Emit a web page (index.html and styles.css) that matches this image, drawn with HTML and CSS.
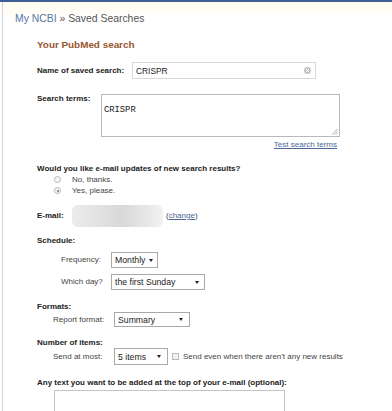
FILE: index.html
```html
<!DOCTYPE html>
<html>
<head>
<meta charset="utf-8">
<link rel="stylesheet" href="styles.css">
</head>
<body>
<div class="topbar"></div>
<div class="frame">
  <div class="crumb"><a class="crumb-link">My NCBI</a> » Saved Searches</div>
  <div class="form">
    <h2 class="title">Your PubMed search</h2>

    <div class="row row-name">
      <span class="lbl lbl-name">Name of saved search:</span>
      <div class="input">
        <span class="input-text">CRISPR</span>
        <span class="clear"><svg width="7" height="7" viewBox="0 0 7 7"><circle cx="3.5" cy="3.5" r="3.5" fill="#c4c4c4"/><path d="M2 2L5 5M5 2L2 5" stroke="#fff" stroke-width="1"/></svg></span>
      </div>
    </div>

    <div class="terms-block">
      <div class="row row-terms">
        <span class="lbl lbl-terms">Search terms:</span>
        <div class="textarea">
          <span class="mono">CRISPR</span>
          <svg class="grip" width="7" height="7" viewBox="0 0 7 7"><path d="M6.5 1L1 6.5M6.5 3.5L3.5 6.5M6.5 5.5L5.5 6.5" stroke="#999" stroke-width="0.8"/></svg>
        </div>
      </div>
      <div class="testlink"><a class="link">Test search terms</a></div>
    </div>

    <div class="q">Would you like e-mail updates of new search results?</div>
    <div class="radio-row"><span class="radio"></span><span class="txt">No, thanks.</span></div>
    <div class="radio-row"><span class="radio radio-on"></span><span class="txt">Yes, please.</span></div>

    <div class="row row-email">
      <span class="lbl lbl-email">E-mail:</span>
      <span class="blur"></span>
      <span class="txt">(<a class="link">change</a>)</span>
    </div>

    <div class="section sec-schedule">Schedule:</div>
    <div class="row sub row-freq">
      <span class="txt sublbl w50">Frequency:</span>
      <div class="select sel-month"><span>Monthly</span><span class="arrow"></span></div>
    </div>
    <div class="row sub row-day">
      <span class="txt sublbl w50">Which day?</span>
      <div class="select sel-day"><span>the first Sunday</span><span class="arrow"></span></div>
    </div>

    <div class="section sec-formats">Formats:</div>
    <div class="row sub2 row-report">
      <span class="txt sublbl w61">Report format:</span>
      <div class="select sel-report"><span>Summary</span><span class="arrow"></span></div>
    </div>

    <div class="section sec-items">Number of items:</div>
    <div class="row sub2 row-items">
      <span class="txt sublbl w61">Send at most:</span>
      <div class="select sel-items"><span>5 items</span><span class="arrow"></span></div>
      <span class="check"></span>
      <span class="txt">Send even when there aren't any new results</span>
    </div>

    <div class="section sec-text">Any text you want to be added at the top of your e-mail (optional):</div>
    <div class="bigarea"></div>
  </div>
</div>
</body>
</html>
```

FILE: styles.css
```css
html, body {
  margin: 0;
  padding: 0;
  background: #fff;
  font-family: "Liberation Sans", Arial, sans-serif;
  color: #222;
  overflow: hidden;
}
.topbar {
  height: 2px;
  background: #3b5f92;
}
.frame {
  margin-left: 2px;
  border-left: 1px solid #d4d4d4;
  height: 409px;
  background: linear-gradient(#fffcf0 0px, #fffdf6 10px, #fff 14px);
}
.crumb {
  padding-top: 11px;
  padding-left: 12px;
  font-size: 10.4px;
  line-height: 12px;
  height: 12px;
  color: #555;
}
.crumb-link {
  color: #56769f;
}
.form {
  padding-left: 34px;
}
.title {
  margin: 14px 0 0 0;
  font-size: 9.9px;
  line-height: 12px;
  height: 12px;
  font-weight: bold;
  color: #97552f;
}
.row {
  display: flex;
  align-items: center;
}
.lbl {
  font-weight: bold;
  font-size: 8px;
  line-height: 10px;
  color: #222;
  flex: none;
}
.txt {
  font-size: 8px;
  line-height: 10px;
  color: #444;
  white-space: nowrap;
}
.link {
  color: #4b6895;
  text-decoration: underline;
}
.row-name {
  margin-top: 11px;
  height: 17px;
}
.lbl-name { width: 95px; }
.input {
  box-sizing: border-box;
  width: 184px;
  height: 17px;
  border: 1px solid #d8d8d8;
  display: flex;
  align-items: center;
  justify-content: space-between;
  padding: 0 4px 0 3px;
}
.input-text {
  font-size: 8.4px;
  color: #222;
}
.clear {
  display: flex;
}
.terms-block {
  width: 303px;
}
.row-terms {
  margin-top: 15px;
  align-items: flex-start;
}
.lbl-terms {
  width: 64px;
  padding-top: 0;
}
.textarea {
  box-sizing: border-box;
  width: 239px;
  height: 43px;
  border: 1px solid #b9b9b9;
  position: relative;
  padding: 3px 0 0 2px;
}
.mono {
  font-family: "Liberation Mono", "Courier New", monospace;
  font-size: 8.8px;
  line-height: 10px;
  color: #222;
}
.grip {
  position: absolute;
  right: 1px;
  bottom: 1px;
}
.testlink {
  margin-top: 3px;
  text-align: right;
  padding-right: 3px;
  font-size: 8px;
  line-height: 10px;
  height: 10px;
}
.q {
  margin-top: 14px;
  font-weight: bold;
  font-size: 8px;
  line-height: 10px;
  height: 10px;
}
.radio-row {
  display: flex;
  align-items: center;
  height: 11px;
  padding-left: 17px;
}
.radio {
  box-sizing: border-box;
  width: 7px;
  height: 7px;
  border-radius: 50%;
  border: 1px solid #b8b8b8;
  background: #f4f4f4;
  margin-right: 11px;
  position: relative;
}
.radio-on::after {
  content: "";
  position: absolute;
  left: 1.5px;
  top: 1.5px;
  width: 2px;
  height: 2px;
  border-radius: 50%;
  background: #777;
}
.row-email {
  margin-top: 9px;
  height: 22px;
}
.lbl-email { width: 35px; }
.blur {
  width: 91px;
  height: 22px;
  border-radius: 6px;
  background: linear-gradient(90deg, #ececec 0%, #e2e2e2 30%, #d8d8d8 55%, #e6e6e6 80%, #f2f2f2 100%);
  margin-right: 3px;
}
.section {
  font-weight: bold;
  font-size: 8px;
  line-height: 10px;
  height: 10px;
}
.sec-schedule { margin-top: 9px; }
.sub {
  padding-left: 24px;
  height: 16px;
  margin-top: 6px;
}
.sublbl { flex: none; }
.w50 { width: 50px; }
.w61 { width: 61px; }
.select {
  box-sizing: border-box;
  height: 16px;
  border: 1px solid #a9a9a9;
  display: flex;
  align-items: center;
  justify-content: space-between;
  padding: 0 4px 0 3px;
  font-size: 8.7px;
  color: #222;
  background: #fff;
  flex: none;
}
.arrow {
  width: 0;
  height: 0;
  border-left: 2px solid transparent;
  border-right: 2px solid transparent;
  border-top: 3px solid #222;
}
.sel-month { width: 47px; }
.sel-day { width: 94px; padding-right: 5px; }
.sec-formats { margin-top: 12px; }
.sub2 {
  padding-left: 16px;
}
.row-report {
  height: 15px;
}
.sel-report { width: 76px; height: 15px; padding-right: 6px; }
.sec-items { margin-top: 11px; }
.row-items {
  height: 17px;
}
.sel-items { width: 54px; height: 17px; padding-right: 6px; }
.check {
  box-sizing: border-box;
  width: 7px;
  height: 7px;
  border: 1px solid #b8b8b8;
  background: #f2f2f2;
  margin: 0 4px 0 4px;
  flex: none;
}
.sec-text { margin-top: 13px; }
.bigarea {
  box-sizing: border-box;
  margin-top: 2px;
  margin-left: 17px;
  width: 231px;
  height: 40px;
  border: 1px solid #c4c4c4;
}
```
